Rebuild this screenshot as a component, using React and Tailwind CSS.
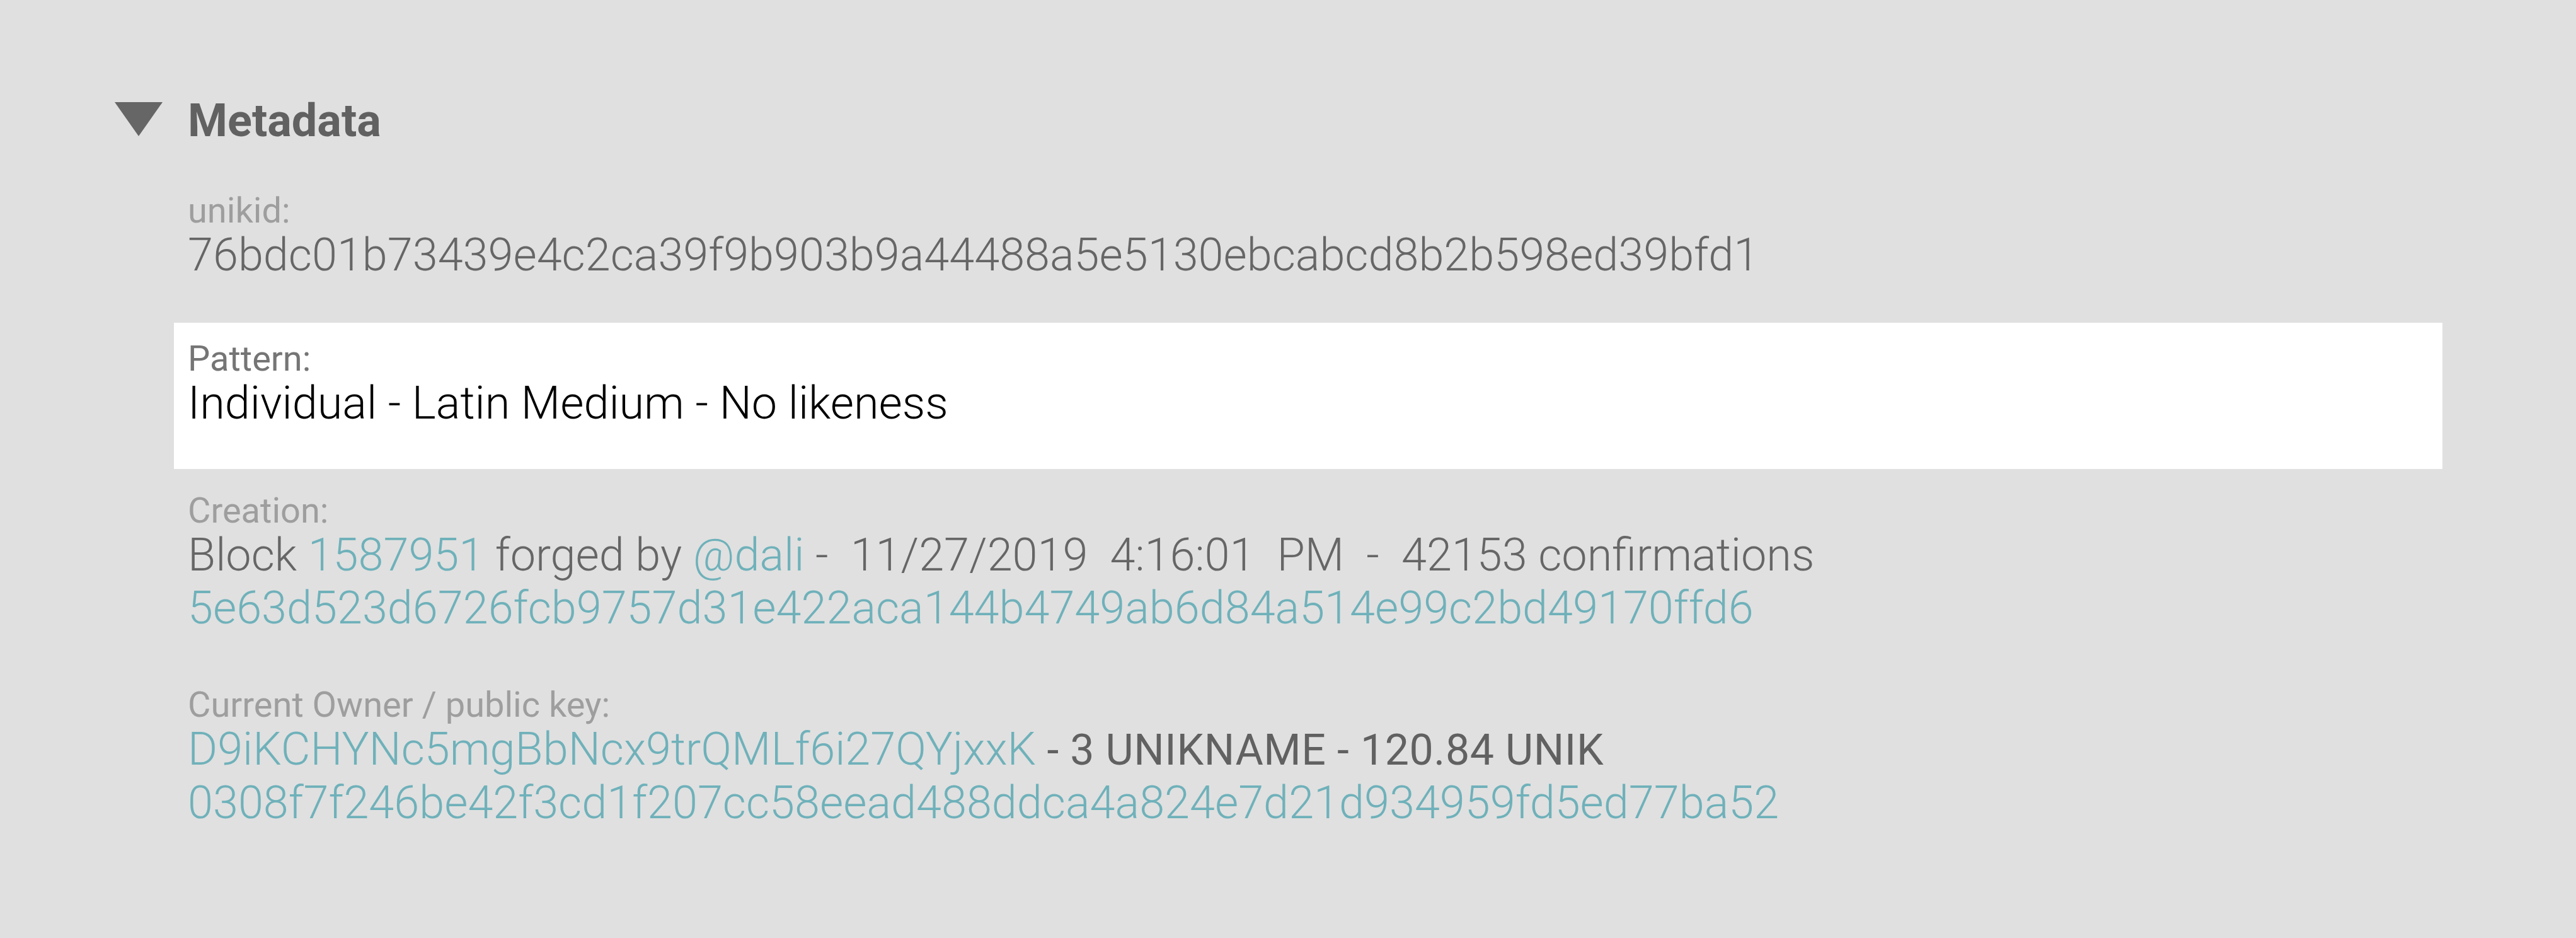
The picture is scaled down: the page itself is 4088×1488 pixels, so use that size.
import React from 'react';

const teal = 'text-[#6fb1ba]';

const Label = ({ children, className = 'text-[#9e9e9e]' }) => (
  <div className={`text-[56px] leading-[58px] font-normal ${className}`}>{children}</div>
);

const Value = ({ children, className = 'text-[#666666]' }) => (
  <div className={`text-[72px] leading-[84px] font-light whitespace-nowrap ${className}`}>{children}</div>
);

const Metadata = () => {
  const nb = '\u00a0\u00a0';
  return (
    <section className="flex flex-col">
      {/* header */}
      <div className="flex items-start pt-[148px]">
        <svg className="ml-[182px] mt-[14px]" width="76" height="54" viewBox="0 0 76 54">
          <polygon points="0,0 76,0 38,54" fill="#666666" />
        </svg>
        <h2 className="ml-[40px] text-[72px] leading-[88px] font-bold text-[#616161]">Metadata</h2>
      </div>

      <div className="ml-[276px] w-[3600px] flex flex-col">
        <div className="mt-[41px] px-[22px] pt-[28px] pb-[62px]">
          <Label>unikid:</Label>
          <Value>76bdc01b73439e4c2ca39f9b903b9a44488a5e5130ebcabcd8b2b598ed39bfd1</Value>
        </div>

        <div className="mt-[3px] bg-white px-[22px] pt-[28px] pb-[62px]">
          <Label className="text-[#757575]">Pattern:</Label>
          <Value className="text-black">Individual - Latin Medium - No likeness</Value>
        </div>

        <div className="mt-[9px] px-[22px] pt-[28px] pb-[54px]">
          <Label>Creation:</Label>
          <Value>
            Block <span className={teal}>1587951</span> forged by <span className={teal}>@dali</span>
            {` -${nb}11/27/2019${nb}4:16:01${nb}PM${nb}-${nb}42153 confirmations`}
          </Value>
          <Value className={teal}>5e63d523d6726fcb9757d31e422aca144b4749ab6d84a514e99c2bd49170ffd6</Value>
        </div>

        <div className="px-[22px] pt-[28px] pb-[62px]">
          <Label>Current Owner / public key:</Label>
          <Value>
            <span className={teal}>D9iKCHYNc5mgBbNcx9trQMLf6i27QYjxxK</span>
            <span className="text-[68px] font-normal tracking-[0.6px] text-[#616161]"> - 3 UNIKNAME - 120.84 UNIK</span>
          </Value>
          <Value className={teal}>0308f7f246be42f3cd1f207cc58eead488ddca4a824e7d21d934959fd5ed77ba52</Value>
        </div>
      </div>
    </section>
  );
};

export default function App() {
  return (
    <div className="min-h-screen w-full bg-[#e0e0e0] font-['Roboto',sans-serif]">
      <Metadata />
    </div>
  );
}
